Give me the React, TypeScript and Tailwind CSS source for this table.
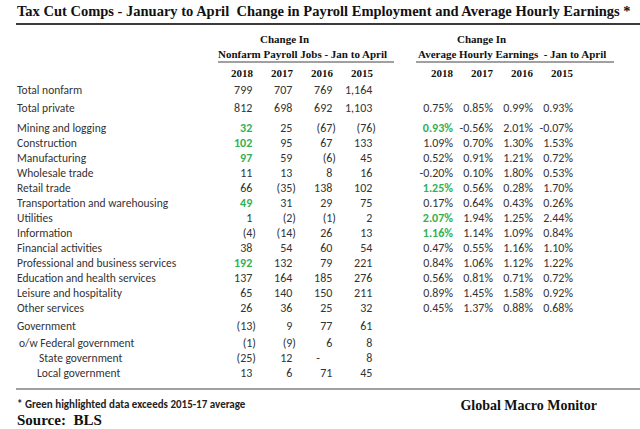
const serif = { fontFamily: '"Liberation Serif", "Times New Roman", serif' };
const body = { fontFamily: 'Carlito, Lato, "Liberation Sans", sans-serif' };

interface RowData {
  label: string;
  indent?: string;
  top?: string;
  jobs: string[];
  jobsGreen?: number[];
  wages?: string[];
  wagesGreen?: number[];
}

const rows: RowData[] = [
  { label: "Total nonfarm", jobs: ["799", "707", "769", "1,164"] },
  { label: "Total private", top: "mt-[3px]", jobs: ["812", "698", "692", "1,103"], wages: ["0.75%", "0.85%", "0.99%", "0.93%"] },
  { label: "Mining and logging", top: "mt-[5px]", jobs: ["32", "25", "(67)", "(76)"], jobsGreen: [0], wages: ["0.93%", "-0.56%", "2.01%", "-0.07%"], wagesGreen: [0] },
  { label: "Construction", jobs: ["102", "95", "67", "133"], jobsGreen: [0], wages: ["1.09%", "0.70%", "1.30%", "1.53%"] },
  { label: "Manufacturing", jobs: ["97", "59", "(6)", "45"], jobsGreen: [0], wages: ["0.52%", "0.91%", "1.21%", "0.72%"] },
  { label: "Wholesale trade", jobs: ["11", "13", "8", "16"], wages: ["-0.20%", "0.10%", "1.80%", "0.53%"] },
  { label: "Retail trade", jobs: ["66", "(35)", "138", "102"], wages: ["1.25%", "0.56%", "0.28%", "1.70%"], wagesGreen: [0] },
  { label: "Transportation and warehousing", jobs: ["49", "31", "29", "75"], jobsGreen: [0], wages: ["0.17%", "0.64%", "0.43%", "0.26%"] },
  { label: "Utilities", jobs: ["1", "(2)", "(1)", "2"], wages: ["2.07%", "1.94%", "1.25%", "2.44%"], wagesGreen: [0] },
  { label: "Information", jobs: ["(4)", "(14)", "26", "13"], wages: ["1.16%", "1.14%", "1.09%", "0.84%"], wagesGreen: [0] },
  { label: "Financial activities", jobs: ["38", "54", "60", "54"], wages: ["0.47%", "0.55%", "1.16%", "1.10%"] },
  { label: "Professional and business services", jobs: ["192", "132", "79", "221"], jobsGreen: [0], wages: ["0.84%", "1.06%", "1.12%", "1.22%"] },
  { label: "Education and health services", jobs: ["137", "164", "185", "276"], wages: ["0.56%", "0.81%", "0.71%", "0.72%"] },
  { label: "Leisure and hospitality", jobs: ["65", "140", "150", "211"], wages: ["0.89%", "1.45%", "1.58%", "0.92%"] },
  { label: "Other services", jobs: ["26", "36", "25", "32"], wages: ["0.45%", "1.37%", "0.88%", "0.68%"] },
  { label: "Government", top: "mt-[3px]", jobs: ["(13)", "9", "77", "61"] },
  { label: "o/w Federal government", indent: "pl-[2px]", top: "mt-[2px]", jobs: ["(1)", "(9)", "6", "8"] },
  { label: "State government", indent: "pl-[22px]", jobs: ["(25)", "12", "-", "8"] },
  { label: "Local government", indent: "pl-[20px]", jobs: ["13", "6", "71", "45"] },
];

const years = ["2018", "2017", "2016", "2015"];

const grid = "grid grid-cols-[199px_repeat(4,40px)_37px_repeat(4,40px)] ml-[17px]";

// excel style: positives leave room for the closing paren
const JobCell = ({ value, green }: { value: string; green: boolean }) => {

  if (value === "-") {
    return <div className="text-right pr-[16px]">-</div>;
  }

  return (
    <div className={`text-right ${green ? "text-[#2fb155] font-bold" : ""}`}>
      {value}
      {!value.endsWith(")") && <span className="invisible">)</span>}
    </div>
  );

};

export default function App() {

  return (

    <div className="w-[640px] h-[429px] bg-white text-[#333] overflow-hidden" style={body}>

      <div className="pl-[17px] pt-[2px] text-[14.5px] leading-[18px] font-bold text-[#111] whitespace-pre" style={serif}>
        Tax Cut Comps - January to April  Change in Payroll Employment and Average Hourly Earnings *
      </div>

      <div className="ml-[16px] mt-[3px] h-[2px] bg-[#3a3a3a]" />

      <div className="flex mt-[7px] text-[11px] font-bold text-[#111]" style={serif}>

        <div className="ml-[218px] w-[176px]">
          <div className="pl-[42px] leading-[15px]">Change In</div>
          <div className="leading-[14px] whitespace-pre">Nonfarm Payroll Jobs - Jan to April</div>
          <div className="h-[2px] bg-[#a0a0a0]" />
        </div>

        <div className="ml-[22px] w-[198px]">
          <div className="pl-[41px] leading-[15px]">Change In</div>
          <div className="leading-[14px] whitespace-pre pl-[2px]">Average Hourly Earnings  - Jan to April</div>
          <div className="h-[2px] bg-[#a0a0a0]" />
        </div>

      </div>

      <div className={`${grid} mt-[3px] h-[15px] leading-[15px] text-[11px] font-bold text-[#111]`} style={serif}>
        <div />
        {years.map(y => (
          <div key={"l" + y} className="text-right pr-[3px]">{y}</div>
        ))}
        <div />
        {years.map(y => (
          <div key={"r" + y} className="text-right">{y}</div>
        ))}
      </div>

      <div className="mt-[2px] text-[12px]">

        {rows.map(row => (

          <div key={row.label} className={`${grid} h-[15px] leading-[15px] ${row.top ?? ""}`}>

            <div className={`whitespace-nowrap text-[11.5px] ${row.indent ?? ""}`}>{row.label}</div>

            {row.jobs.map((v, i) => (
              <JobCell key={i} value={v} green={!!row.jobsGreen?.includes(i)} />
            ))}

            <div />

            {(row.wages ?? ["", "", "", ""]).map((v, i) => (
              <div
                key={i}
                className={`text-right ${row.wagesGreen?.includes(i) ? "text-[#2fb155] font-bold" : ""}`}
              >
                {v}
              </div>
            ))}

          </div>

        ))}

      </div>

      <div className="ml-[16px] mt-[7px] h-[2px] bg-[#a0a0a0]" />

      <div className="flex ml-[17px] mt-[8px]">

        <div>
          <div className="text-[11px] leading-[14px] font-bold text-[#222]">
            * Green highlighted data exceeds 2015-17 average
          </div>
          <div className="mt-[1px] text-[15px] leading-[15px] font-bold text-[#111] whitespace-pre" style={serif}>
            Source:  BLS
          </div>
        </div>

        <div className="ml-auto mr-[43px] text-[14px] leading-[16px] font-bold text-[#111]" style={serif}>
          Global Macro Monitor
        </div>

      </div>

    </div>

  );

}
